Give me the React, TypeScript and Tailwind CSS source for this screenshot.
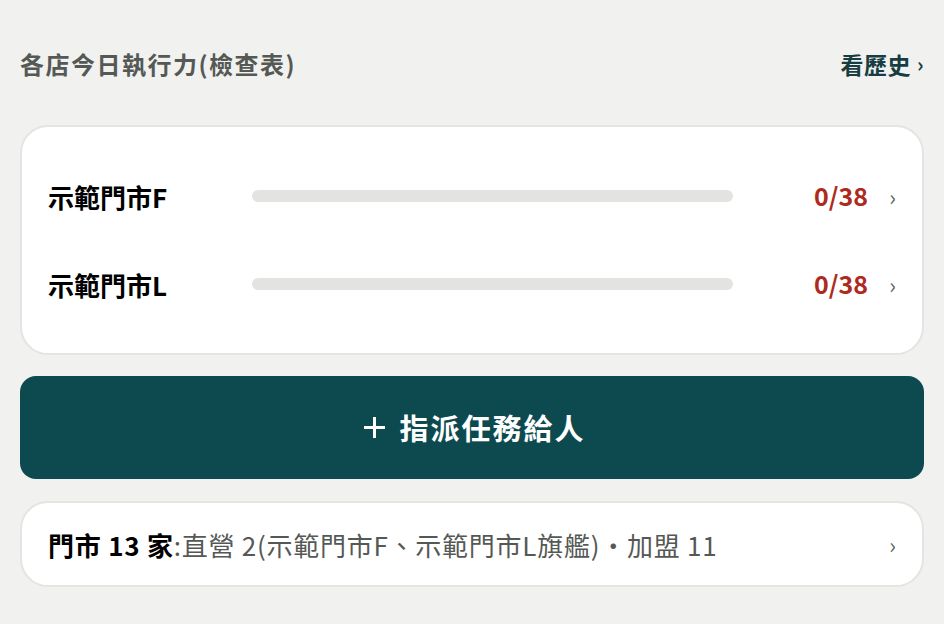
import { useState } from 'react';

interface StoreRow {
  name: string;
  done: number;
  total: number;
}

const stores: StoreRow[] = [
  { name: '示範門市F', done: 0, total: 38 },
  { name: '示範門市L', done: 0, total: 38 },
];

const font = { fontFamily: '"Noto Sans CJK TC", "Noto Sans", sans-serif' };

export default function App() {
  const [rows] = useState(stores);

  return (
    <div className="min-h-screen bg-[#f1f1ef] px-5 pt-[45px]" style={font}>
      <div className="flex items-center justify-between h-[38px] mb-[42px]">
        <h2 className="text-[24px] font-bold text-[#555955] tracking-[1.5px]">各店今日執行力(檢查表)</h2>
        <a className="flex items-center gap-[6px] text-[23px] font-bold text-[#163e42] tracking-[0.5px]">
          看歷史<span className="text-[20px]">›</span>
        </a>
      </div>

      <div className="bg-white border-2 border-[#e4e4e2] rounded-[28px] px-[26px] pt-[25px] pb-[25px]">
        {rows.map((row) => (
          <div key={row.name} className="flex items-center h-[88px]">
            <span className="w-[204px] text-[26px] font-bold text-black">{row.name}</span>
            <div className="flex-1 h-[12px] rounded-full bg-[#e3e4e2] overflow-hidden">
              <div className="h-full bg-[#0d4a4f]" style={{ width: `${(row.done / row.total) * 100}%` }} />
            </div>
            <span className="w-[135px] text-right text-[25px] font-semibold text-[#ad2a21]">
              {row.done}/{row.total}
            </span>
            <span className="w-[28px] text-right text-[22px] text-[#5c6464]">›</span>
          </div>
        ))}
      </div>

      <button className="mt-[21px] w-full h-[103px] rounded-[16px] bg-[#0d4a4f] pl-[6px] text-white text-[29px] font-bold tracking-[2px] flex items-center justify-center gap-[14px]">
        <svg width="21" height="21" viewBox="0 0 21 21" fill="none" stroke="currentColor" strokeWidth="3">
          <path d="M10.5 0v21M0 10.5h21" />
        </svg>
        指派任務給人
      </button>

      <div className="mt-[22px] bg-white border-2 border-[#e4e4e2] rounded-[28px] px-[26px] h-[86px] flex items-center justify-between">
        <p className="text-[26px] text-[#555955] tracking-[0.75px]">
          <span className="font-bold text-black">門市 13 家</span>:直營 2(示範門市F、示範門市L旗艦)・加盟 11
        </p>
        <span className="text-[22px] text-[#5c6464]">›</span>
      </div>
    </div>
  );
}
